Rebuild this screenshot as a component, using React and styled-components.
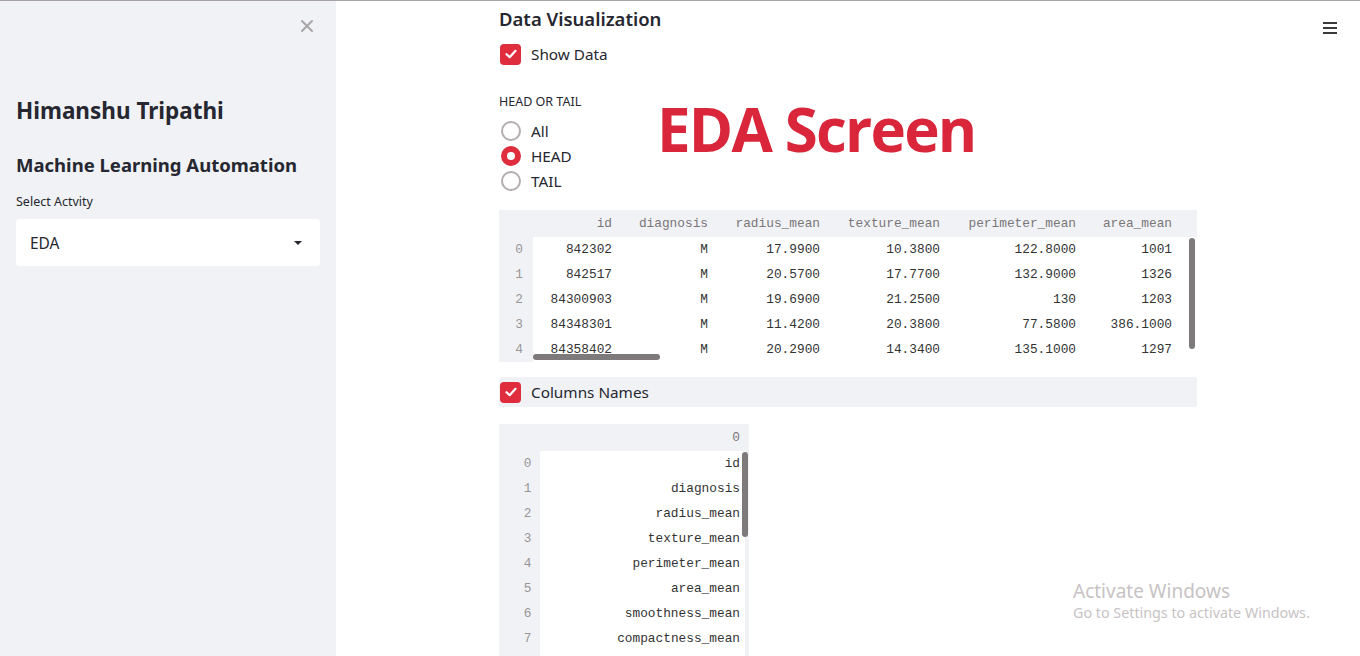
import React from 'react';
import styled, { createGlobalStyle } from 'styled-components';

const GlobalStyle = createGlobalStyle`
  html, body {
    margin: 0;
    padding: 0;
    height: 656px;
    overflow: hidden;
    background: #ffffff;
    font-family: "Noto Sans", "Open Sans", sans-serif;
    color: #262730;
  }
  * { box-sizing: border-box; }
`;

const Page = styled.div`
  display: flex;
  height: 656px;
  border-top: 1px solid #a8a4a6;
  position: relative;
`;

const Sidebar = styled.aside`
  width: 336px;
  flex-shrink: 0;
  background: #f0f2f6;
  padding: 18px 16px 0 16px;
  display: flex;
  flex-direction: column;
`;

const CloseRow = styled.div`
  display: flex;
  justify-content: flex-end;
  padding-right: 6px;
  height: 20px;
  color: #a9a4a6;
`;

const Name = styled.h1`
  margin: 58px 0 0 0;
  font-size: 22.5px;
  font-weight: 700;
  line-height: 28px;
  color: #262730;
`;

const Subtitle = styled.h2`
  margin: 27px 0 0 0;
  font-size: 18.5px;
  font-weight: 700;
  line-height: 26px;
  color: #262730;
`;

const SmallLabel = styled.div`
  font-size: 12.5px;
  line-height: 16px;
  color: #262730;
  margin-top: ${p => p.top || 0}px;
`;

const SelectBox = styled.div`
  margin-top: 9px;
  height: 47px;
  width: 304px;
  background: #ffffff;
  border-radius: 3px;
  display: flex;
  align-items: center;
  justify-content: space-between;
  padding: 0 18px 0 14px;
  font-size: 15.5px;
  color: #262730;
`;

const Caret = styled.span`
  width: 0;
  height: 0;
  border-left: 4px solid transparent;
  border-right: 4px solid transparent;
  border-top: 4px solid #262730;
`;

const Main = styled.main`
  flex: 1;
  padding: 5px 0 0 163px;
`;

const Content = styled.div`
  width: 698px;
  display: flex;
  flex-direction: column;
  position: relative;
`;

const Heading = styled.h3`
  margin: 0;
  font-size: 18.5px;
  font-weight: 600;
  line-height: 26px;
  color: #262730;
`;

const CheckRow = styled.div`
  display: flex;
  align-items: center;
  gap: 10px;
  height: ${p => p.h || 24}px;
  margin-top: ${p => p.top || 0}px;
  background: ${p => (p.shaded ? '#f0f2f6' : 'transparent')};
  border-radius: 3px;
  font-size: 15.3px;
  color: #262730;
`;

const Box = styled.span`
  width: 21px;
  height: 21px;
  border-radius: 4px;
  background: #df2d3e;
  display: inline-flex;
  align-items: center;
  justify-content: center;
  margin-left: 1px;
`;

const RadioGroup = styled.div`
  display: flex;
  flex-direction: column;
  margin-top: 8px;
`;

const RadioRow = styled.div`
  display: flex;
  align-items: center;
  gap: 10px;
  height: 25px;
  font-size: 15.3px;
  color: #262730;
`;

const RadioDot = styled.span`
  width: 20px;
  height: 20px;
  border-radius: 50%;
  margin-left: 2px;
  border: ${p => (p.on ? '6px solid #df2d3e' : '2px solid #b3adad')};
  background: #ffffff;
`;

const Stamp = styled.div`
  position: absolute;
  left: 158px;
  top: 90px;
  font-family: "Open Sans", "Noto Sans", sans-serif;
  font-size: 60px;
  font-weight: 700;
  letter-spacing: -1.8px;
  color: #d9263a;
  line-height: 66px;
`;

const Table = styled.div`
  position: relative;
  width: ${p => p.w}px;
  margin-top: ${p => p.top || 0}px;
  background: #f0f2f6;
  font-family: "Liberation Mono", "DejaVu Sans Mono", monospace;
  font-size: 12.8px;
  overflow: hidden;
`;

const Row = styled.div`
  display: grid;
  grid-template-columns: ${p => p.cols};
  height: ${p => p.h || 25}px;
  align-items: center;
`;

const Cell = styled.div`
  padding-right: ${p => p.pr ?? 6}px;
  height: 100%;
  display: flex;
  align-items: center;
  justify-content: flex-end;
  color: ${p => (p.head ? '#7a7578' : '#333333')};
  background: ${p => (p.head ? 'transparent' : '#ffffff')};
  white-space: nowrap;
`;

const IndexCell = styled.div`
  text-align: center;
  color: #9a9597;
  padding-left: ${p => p.pl || 0}px;
`;

const VScroll = styled.div`
  position: absolute;
  top: ${p => p.top}px;
  right: ${p => p.right}px;
  width: 6px;
  height: ${p => p.h}px;
  border-radius: 3px;
  background: #7e7a7c;
`;

const HScroll = styled.div`
  position: absolute;
  left: 34px;
  bottom: 2px;
  width: 127px;
  height: 6px;
  border-radius: 3px;
  background: #7e7a7c;
`;

const Hamburger = styled.div`
  position: absolute;
  top: 21px;
  right: 23px;
  width: 14px;
  display: flex;
  flex-direction: column;
  gap: 3px;
  span {
    height: 2px;
    background: #3a3a3a;
  }
`;

const Watermark = styled.div`
  position: absolute;
  left: 1073px;
  top: 578px;
  font-family: "Noto Sans", "Open Sans", sans-serif;
  color: #c7c3c5;
  div:first-child {
    font-size: 19px;
    line-height: 24px;
  }
  div:last-child {
    font-size: 14.3px;
    line-height: 20px;
  }
`;

const Check = () => (
  <svg width="14" height="14" viewBox="0 0 14 14">
    <path d="M2.5 7.2 L5.7 10.2 L11.5 3.8" fill="none" stroke="#fff" strokeWidth="2.2" strokeLinecap="round" strokeLinejoin="round" />
  </svg>
);

const headCols = ['id', 'diagnosis', 'radius_mean', 'texture_mean', 'perimeter_mean', 'area_mean'];
const rows = [
  ['842302', 'M', '17.9900', '10.3800', '122.8000', '1001'],
  ['842517', 'M', '20.5700', '17.7700', '132.9000', '1326'],
  ['84300903', 'M', '19.6900', '21.2500', '130', '1203'],
  ['84348301', 'M', '11.4200', '20.3800', '77.5800', '386.1000'],
  ['84358402', 'M', '20.2900', '14.3400', '135.1000', '1297'],
];
const dataCols = '34px 85px 96px 112px 120px 136px 96px 19px';

const names = [
  'id', 'diagnosis', 'radius_mean', 'texture_mean', 'perimeter_mean',
  'area_mean', 'smoothness_mean', 'compactness_mean',
];
const nameCols = '41px 205px 4px';

export default function App() {
  return (
    <>
      <GlobalStyle />
      <Page>
        <Sidebar>
          <CloseRow>
            <svg width="14" height="14" viewBox="0 0 14 14">
              <path d="M2 2 L12 12 M12 2 L2 12" stroke="#aaa5a7" strokeWidth="2" strokeLinecap="round" />
            </svg>
          </CloseRow>
          <Name>Himanshu Tripathi</Name>
          <Subtitle>Machine Learning Automation</Subtitle>
          <SmallLabel top={16}>Select Actvity</SmallLabel>
          <SelectBox>
            <span>EDA</span>
            <Caret />
          </SelectBox>
        </Sidebar>

        <Main>
          <Content>
            <Heading>Data Visualization</Heading>
            <CheckRow top={10}>
              <Box><Check /></Box>
              Show Data
            </CheckRow>
            <SmallLabel top={28}>HEAD OR TAIL</SmallLabel>
            <RadioGroup>
              <RadioRow><RadioDot />All</RadioRow>
              <RadioRow><RadioDot on />HEAD</RadioRow>
              <RadioRow><RadioDot />TAIL</RadioRow>
            </RadioGroup>
            <Stamp>EDA Screen</Stamp>

            <Table w={698} top={17}>
              <Row cols={dataCols} h={27}>
                <IndexCell />
                {headCols.map(c => <Cell head key={c}>{c}</Cell>)}
                <span />
              </Row>
              {rows.map((r, i) => (
                <Row cols={dataCols} key={i}>
                  <IndexCell pl={6}>{i}</IndexCell>
                  {r.map((v, j) => <Cell key={j}>{v}</Cell>)}
                  <Cell />
                </Row>
              ))}
              <VScroll top={28} right={2} h={111} />
              <HScroll />
            </Table>

            <CheckRow shaded h={30} top={15}>
              <Box><Check /></Box>
              Columns Names
            </CheckRow>

            <Table w={250} top={17}>
              <Row cols={nameCols} h={27}>
                <IndexCell />
                <Cell head pr={5}>0</Cell>
                <span />
              </Row>
              {names.map((n, i) => (
                <Row cols={nameCols} key={n}>
                  <IndexCell pl={16}>{i}</IndexCell>
                  <Cell pr={5}>{n}</Cell>
                  <span />
                </Row>
              ))}
              <Row cols={nameCols}>
                <IndexCell />
                <Cell />
                <span />
              </Row>
              <VScroll top={28} right={1} h={85} />
            </Table>
          </Content>
        </Main>

        <Hamburger><span /><span /><span /></Hamburger>
        <Watermark>
          <div>Activate Windows</div>
          <div>Go to Settings to activate Windows.</div>
        </Watermark>
      </Page>
    </>
  );
}
